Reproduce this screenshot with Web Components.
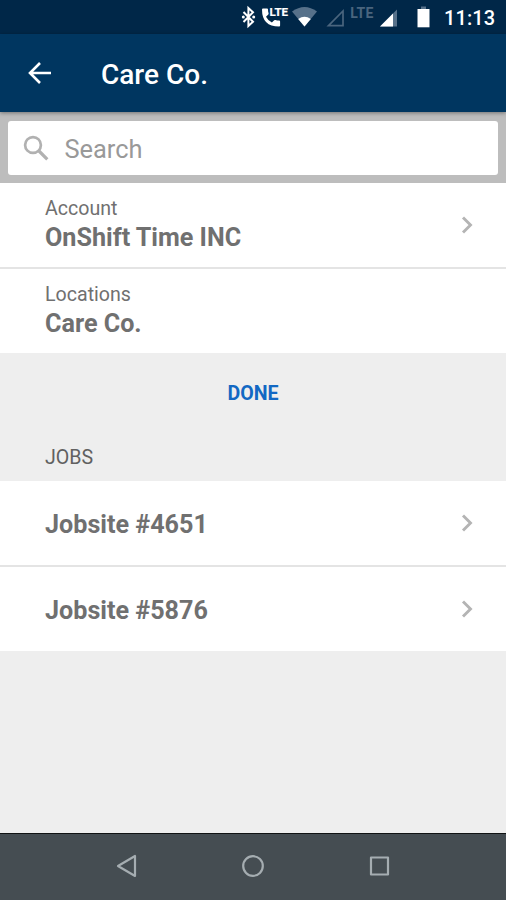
<!DOCTYPE html>
<html lang="en">
<head>
<meta charset="utf-8">
<title>Care Co.</title>
<style>
html,body{margin:0;height:100%}
body{font-family:Roboto,"Liberation Sans",sans-serif;background:#eee;overflow:hidden}
</style>
</head>
<body>
<phone-screen>
  <status-bar time="11:13"></status-bar>
  <app-header>Care Co.</app-header>
  <search-box>Search</search-box>
  <list-row label="Account" arrow divider>OnShift Time INC</list-row>
  <list-row label="Locations">Care Co.</list-row>
  <done-button>DONE</done-button>
  <section-title>JOBS</section-title>
  <list-row arrow divider>Jobsite #4651</list-row>
  <list-row arrow>Jobsite #5876</list-row>
  <nav-bar></nav-bar>
</phone-screen>
<script>
const define = (name, render) => customElements.define(name, class extends HTMLElement {
  constructor() {
    super();
    this.attachShadow({ mode: 'open' });
  }
  connectedCallback() {
    this.shadowRoot.innerHTML = render(this);
  }
});

define('phone-screen', () => `
<style>
:host{display:flex;flex-direction:column;width:506px;height:900px;background:#eee}
::slotted(*){flex:none}
::slotted(nav-bar){margin-top:auto}
</style><slot></slot>`);

define('status-bar', el => `
<style>
:host{display:flex;height:34px;background:#002748;color:#fff;justify-content:flex-end;padding-right:11px;box-sizing:border-box}
svg{display:block;height:34px;flex:none}
text{font-family:Roboto,sans-serif;font-weight:700}
span{width:51px;font-size:20px;font-weight:500;line-height:36px;letter-spacing:.1px;white-space:nowrap}
</style>
<svg width="20" viewBox="239 0 20 34"><path d="M243.500 12l9.500 9.700-4.600 4.300v-18l4.600 4.300-9.500 9.700" fill="none" stroke="#fff" stroke-width="2"/><circle cx="243.300" cy="17" r="1.500" fill="#fff"/><circle cx="253.700" cy="17" r="1.500" fill="#fff"/></svg>
<svg width="31" viewBox="259 0 31 34"><path d="M263 8.500h4q1 0 1 1 0 2 .6 3.700.2.700-.3 1.200l-2.300 2.300q2.100 4 5.900 5.900l2.300-2.300q.5-.5 1.200-.3 1.800.6 3.700.6 1 0 1 1v4q0 1-1 1Q262 26.600 262 9.500q0-1 1-1z" fill="#fff"/><text x="269.500" y="15.500" font-size="11.500" fill="#fff" stroke="#fff" stroke-width=".2" textLength="18.500" lengthAdjust="spacing">LTE</text></svg>
<svg width="31" viewBox="290 0 31 34"><path d="M292 11.500Q304.500 2.500 317 11.500L304.500 26.500z" fill="#57718a"/><path d="M298.200 19Q304.500 14.500 310.800 19L304.500 26.500z" fill="#fff"/></svg>
<svg width="27" viewBox="321 0 27 34"><path d="M328.500 25.700L343 11v14.700z" fill="none" stroke="#4a657e" stroke-width="1.700"/></svg>
<svg width="29" viewBox="348 0 29 34"><text x="350.300" y="17.700" font-size="14" font-weight="500" fill="#4a657e" textLength="23">LTE</text></svg>
<svg width="30" viewBox="377 0 30 34"><path d="M397 9.500V26.500H380z" fill="#57718a"/><path d="M393 13.500V26.500H380z" fill="#fff"/></svg>
<svg width="37.500" viewBox="407 0 37.500 34"><path d="M421 6.500h5v3h-5z" fill="#57718a"/><path d="M417.500 9H429.500V27.300H417.500z" fill="#fff"/></svg>
<span>${el.getAttribute('time')}</span>`);

define('app-header', () => `
<style>
:host{display:flex;align-items:center;height:78px;background:#003660;color:#fff;box-shadow:0 1px 4px rgba(0,0,0,.4);position:relative;z-index:1}
svg{margin-left:27px;width:25px;height:24px}
h1{margin:3px 0 0 49px;font-size:28px;font-weight:500;line-height:34px}
</style>
<svg viewBox="0 0 25 24"><path d="M24 12H3M13 2L3 12l10 10" fill="none" stroke="#fff" stroke-width="2.600"/></svg><h1><slot></slot></h1>`);

define('search-box', () => `
<style>
:host{display:block;height:71px;box-sizing:border-box;padding:9px 8px 8px;background:#bdbdbd}
div{height:53.500px;border-radius:3px;background:#fff;display:flex;align-items:center;color:#999;font-size:25.400px;box-sizing:border-box}
svg{width:26px;height:26px;margin-left:15px}
span{margin:3px 0 0 15.500px}
</style>
<div><svg viewBox="0 0 26 26" fill="none" stroke="#b1b1b1"><circle cx="10" cy="10" r="7.900" stroke-width="2.700"/><path d="M15.500 15.500L24.300 24.300" stroke-width="3.200"/></svg><span><slot></slot></span></div>`);

define('list-row', el => `
<style>
:host{display:flex;height:84px;background:#fff;align-items:center;padding:0 33px 0 45px;color:#707070}
:host([divider]){border-bottom:2px solid #e4e4e4}
.text{flex:1}
small{display:block;font-size:19.600px;line-height:26px;padding-top:1px}
b{display:block;font-size:25.150px;line-height:32px;font-weight:700}
:host([label]) b{margin-bottom:1px}
:host(:not([label])) b{padding-top:4px}
svg{width:12px;height:18px}
</style>
<div class="text">${el.hasAttribute('label') ? `<small>${el.getAttribute('label')}</small>` : ''}<b><slot></slot></b></div>
${el.hasAttribute('arrow') ? '<svg viewBox="0 0 12 18"><path d="M2 1.500L9.500 9 2 16.500" fill="none" stroke="#b4b4b4" stroke-width="2.900"/></svg>' : ''}`);

define('done-button', () => `
<style>
:host{display:flex;height:80px;padding-top:1px;box-sizing:border-box;align-items:center;justify-content:center;color:#1268c3;font-size:19.600px;font-weight:700}
</style><slot></slot>`);

define('section-title', () => `
<style>
:host{display:flex;height:48px;align-items:center;padding-left:45px;color:#616161;font-size:19.600px}
</style><slot></slot>`);

define('nav-bar', () => `
<style>
:host{display:grid;grid-template-columns:repeat(3,126.500px);justify-content:center;align-items:center;justify-items:center;height:66px;border-top:1px solid #101314;background:#454d52}
svg{width:24px;height:24px;margin-top:-2px;fill:none;stroke:#a5adb1;stroke-width:2.200;stroke-linejoin:round}
</style>
<svg viewBox="0 0 24 24"><path d="M3 12L20 2v20z"/></svg>
<svg viewBox="0 0 24 24"><circle cx="12" cy="12" r="9.800"/></svg>
<svg viewBox="0 0 24 24"><path d="M3 3.500h17v17h-17z"/></svg>`);
</script>
</body>
</html>
